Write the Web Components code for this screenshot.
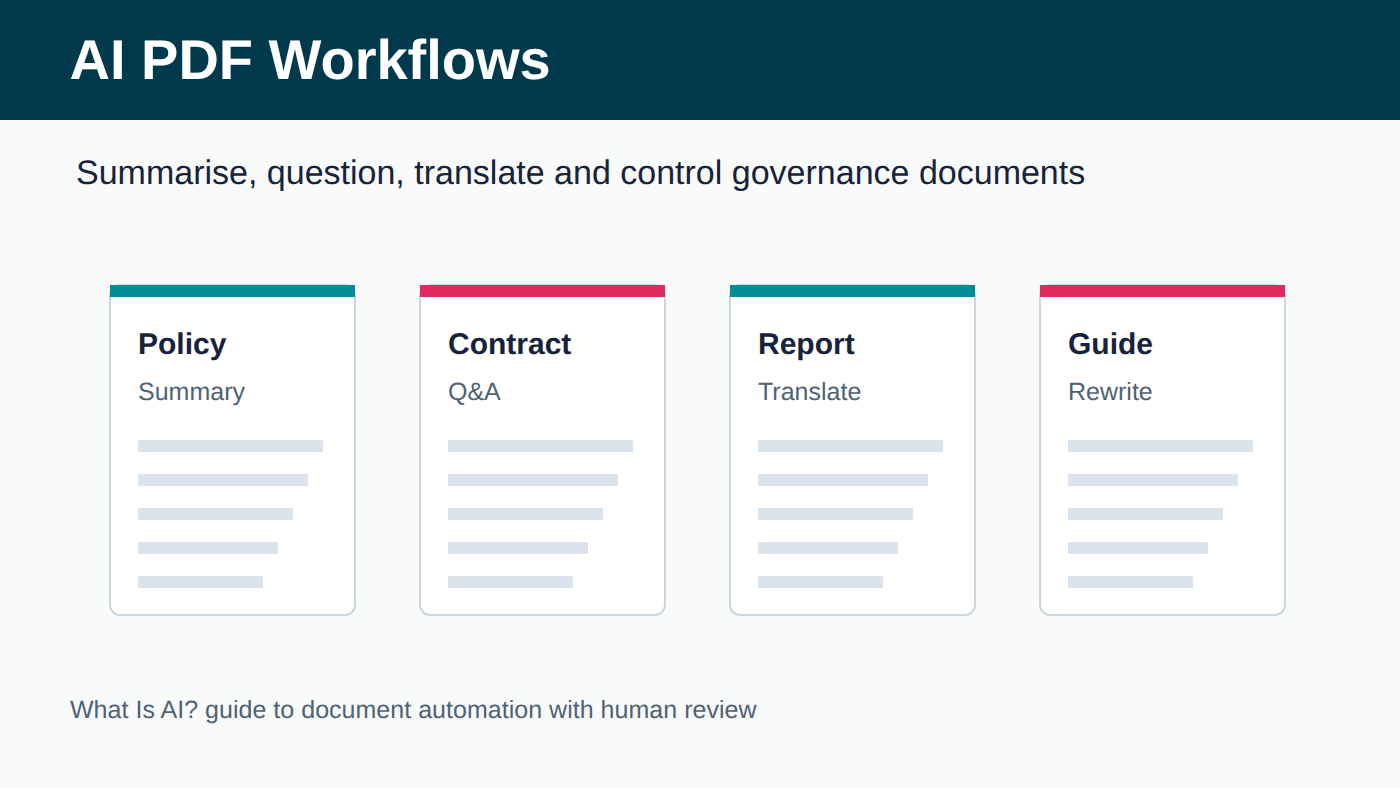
<!DOCTYPE html>
<html><head><meta charset="utf-8"><style>
html,body{margin:0;padding:0;width:1400px;height:788px;overflow:hidden;background:#f9fbfb;font-family:"Liberation Sans",Arial,sans-serif;text-rendering:geometricPrecision}
</style></head><body>
<slide-page></slide-page>
<template id="page-t"><style>
:host{display:flex;flex-direction:column;width:1400px;height:788px;background:#f9fbfb;color:#17233a}
header{height:120px;background:#00394b;display:flex;align-items:center;padding-left:69.5px;box-sizing:border-box}
h1{margin:0;font-size:56px;font-weight:700;color:#fff;line-height:1}
.sub{margin:33px 0 0 76px;font-size:34px;line-height:40px;height:40px;color:#17233a}
.cards{display:flex;gap:63px;margin:91px 0 0 109px}
.foot{margin:79px 0 0 70px;font-size:25px;letter-spacing:.025px;line-height:30px;color:#4f6275}
</style>
<header><h1>AI PDF Workflows</h1></header>
<div class="sub">Summarise, question, translate and control governance documents</div>
<div class="cards">
<doc-card accent="#008c95"><span slot="title">Policy</span>Summary</doc-card>
<doc-card accent="#e0295f"><span slot="title">Contract</span>Q&amp;A</doc-card>
<doc-card accent="#008c95"><span slot="title">Report</span>Translate</doc-card>
<doc-card accent="#e0295f"><span slot="title">Guide</span>Rewrite</doc-card>
</div>
<div class="foot">What Is AI? guide to document automation with human review</div>
</template>
<template id="card-t"><style>
:host{display:block;width:247px;height:332px;box-sizing:border-box;background:#fff;border:2px solid #cbd6e0;border-radius:11px}
.bar{height:12px;margin:-1px -1px 0;background:var(--accent)}
.body{padding:31px 0 0 27px}
.t{font-size:30px;font-weight:700;line-height:34px;color:#17233a}
.s{margin-top:16px;font-size:25px;line-height:28px;color:#4f6275}
.lines{margin-top:34px;display:flex;flex-direction:column;gap:22px}
.lines i{display:block;height:12px;background:#dbe4ec}
</style>
<div class="bar"></div>
<div class="body"><div class="t"><slot name="title"></slot></div><div class="s"><slot></slot></div>
<div class="lines"><i style="width:185px"></i><i style="width:170px"></i><i style="width:155px"></i><i style="width:140px"></i><i style="width:125px"></i></div></div>
</template>
<script>
function tpl(id){return document.getElementById(id).content.cloneNode(true)}
class DocCard extends HTMLElement{constructor(){super();this.attachShadow({mode:"open"}).appendChild(tpl("card-t"))}
connectedCallback(){this.style.setProperty("--accent",this.getAttribute("accent"))}}
customElements.define("doc-card",DocCard);
class SlidePage extends HTMLElement{constructor(){super();this.attachShadow({mode:"open"}).appendChild(tpl("page-t"))}}
customElements.define("slide-page",SlidePage);
</script>
</body></html>
